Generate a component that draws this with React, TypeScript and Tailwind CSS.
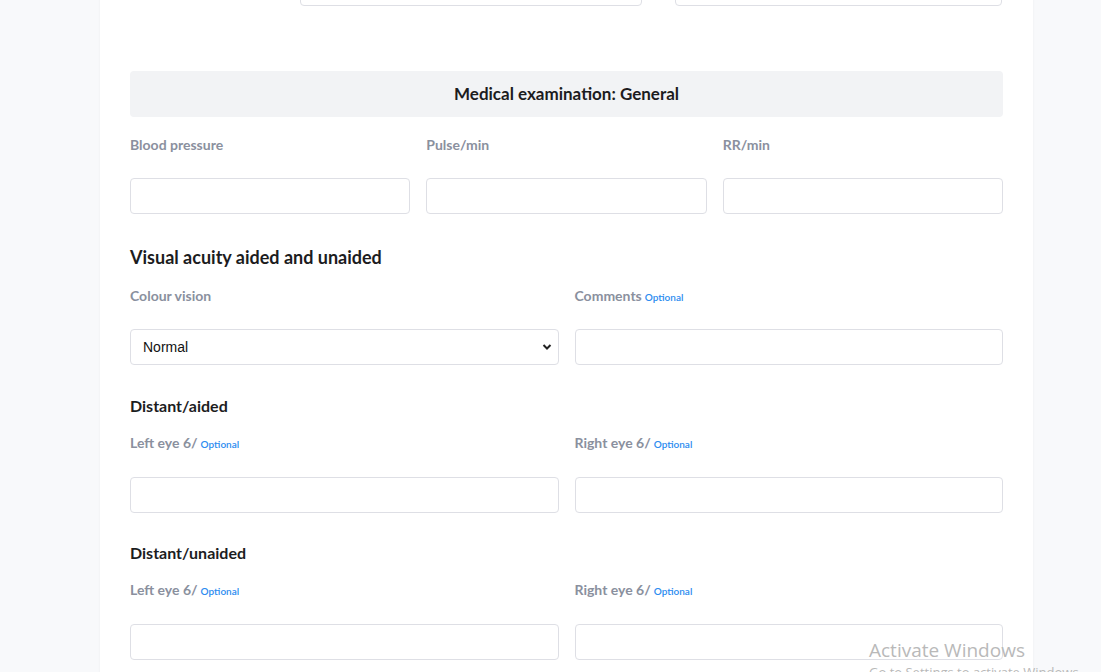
import React from "react";

/**
 * Medical examination form: general section (scrolled view).
 */

const lato = { fontFamily: "Lato, 'Open Sans', sans-serif" };

function Label({ text, optional, tall }: { text: string; optional?: boolean; tall?: boolean }) {
  return (
    <label className={`block h-5 text-[14px] font-bold leading-5 text-[#8a909e] ${tall ? "mb-6" : "mb-[23px]"}`}>
      {text}
      {optional && <span className="ml-[3px] text-[10px] font-semibold text-[#2d8cf0]">Optional</span>}
    </label>
  );
}

function TextInput() {
  return <input type="text" className="block h-9 w-full rounded border border-[#dedfe5] bg-white px-3 text-sm outline-none" />;
}

function Field({ label, optional, tall }: { label: string; optional?: boolean; tall?: boolean }) {
  return (
    <div className="min-w-0">
      <Label text={label} optional={optional} tall={tall} />
      <TextInput />
    </div>
  );
}

export default function App() {
  return (
    <div className="relative h-[672px] overflow-hidden bg-[#f8f9fb]" style={lato}>
      <div className="ml-[100px] w-[933px] bg-white px-[30px] pb-10 shadow-[0_0_2px_rgba(0,0,0,0.06)]">
        {/* row scrolled above the viewport */}
        <div className="-mt-[30px] flex">
          <div className="w-[170px] shrink-0" />
          <div className="h-9 w-[342px] rounded border border-[#dedfe5]" />
          <div className="ml-[33px] h-9 w-[327px] rounded border border-[#dedfe5]" />
        </div>

        <div className="mt-[65px] flex h-[46px] items-center justify-center rounded bg-[#f2f3f5]">
          <h2 className="text-[17px] font-bold text-[#1c1c1e]">Medical examination: General</h2>
        </div>

        <div className="mt-[18px] grid grid-cols-3 gap-4">
          <Field label="Blood pressure" />
          <Field label="Pulse/min" />
          <Field label="RR/min" />
        </div>

        <h3 className="mt-[29px] mb-[15px] text-[18px] font-bold leading-7 text-[#1c1c1e]">Visual acuity aided and unaided</h3>

        <div className="grid grid-cols-2 gap-4">
          <div className="min-w-0">
            <Label text="Colour vision" />
            <div className="relative">
              <select
                defaultValue="Normal"
                className="block h-9 w-full appearance-none rounded border border-[#dedfe5] bg-white pl-3 pr-8 text-[14px] text-[#111] outline-none"
                style={{ fontFamily: "'Liberation Sans', Arial, sans-serif" }}
              >
                <option>Normal</option>
                <option>Abnormal</option>
              </select>
              <svg className="pointer-events-none absolute right-[7px] top-[14px] h-[8px] w-[10px]" viewBox="0 0 10 8" fill="none" stroke="#222" strokeWidth={2}>
                <path d="M1.5 2l3.5 3.5L8.5 2" />
              </svg>
            </div>
          </div>
          <Field label="Comments" optional />
        </div>

        <h3 className="mt-[29px] mb-[15px] text-[16px] font-bold leading-6 text-[#1c1c1e]">Distant/aided</h3>
        <div className="grid grid-cols-2 gap-4">
          <Field label="Left eye 6/" optional tall />
          <Field label="Right eye 6/" optional tall />
        </div>

        <h3 className="mt-7 mb-[15px] text-[16px] font-bold leading-6 text-[#1c1c1e]">Distant/unaided</h3>
        <div className="grid grid-cols-2 gap-4">
          <Field label="Left eye 6/" optional tall />
          <Field label="Right eye 6/" optional tall />
        </div>
      </div>

      {/* OS watermark overlay */}
      <div className="pointer-events-none absolute left-[869px] top-[638px] whitespace-nowrap text-[#b9b9b9]" style={{ fontFamily: "'Open Sans', 'Noto Sans', sans-serif" }}>
        <div className="text-[19px] leading-[25px]">Activate Windows</div>
        <div className="text-[13px] leading-[18px]">Go to Settings to activate Windows.</div>
      </div>
    </div>
  );
}
